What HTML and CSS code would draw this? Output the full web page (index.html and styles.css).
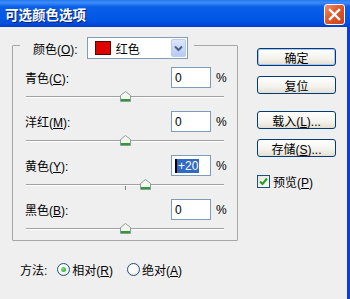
FILE: index.html
```html
<!DOCTYPE html>
<html lang="zh-CN">
<head>
  <meta charset="UTF-8" />
  <title>可选颜色选项</title>
  <link rel="stylesheet" href="styles.css">
</head>
<body>
  <div class="win">
    <!-- Заголовок -->
    <div class="titlebar">
      <span class="title">可选颜色选项</span>
      <span class="close">
        <svg width="13" height="13" viewBox="0 0 13 13"><path d="M2 2 L11 11 M11 2 L2 11" stroke="#fff" stroke-width="2.4" stroke-linecap="square"/></svg>
      </span>
    </div>

    <div class="client">
      <div class="main">
        <fieldset class="group">
          <legend class="legend">
            <span class="legend-inner">
              <span class="lbl">颜色(<u>O</u>):</span>
              <span class="combo">
                <span class="swatch"></span>
                <span class="combo-text">红色</span>
                <span class="combo-btn">
                  <svg width="9" height="7" viewBox="0 0 9 7"><path d="M1 1.5 L4.5 5 L8 1.5" fill="none" stroke="#4d6185" stroke-width="2"/></svg>
                </span>
              </span>
            </span>
          </legend>

          <div class="adj">
            <div class="adj-top"><span class="lbl">青色(<u>C</u>):</span><span class="num">0</span><span class="pct">%</span></div>
            <div class="track"><span class="thumb" style="left:50%"><svg width="11" height="11" viewBox="0 0 11 11"><path d="M5.5 0.5 L10.5 4.5 V10.5 H0.5 V4.5 Z" fill="#f7f7f2" stroke="#8b9aa6"/><rect x="1" y="8" width="9" height="2" fill="#2aa02a"/></svg></span></div>
          </div>
          <div class="adj">
            <div class="adj-top"><span class="lbl">洋红(<u>M</u>):</span><span class="num">0</span><span class="pct">%</span></div>
            <div class="track"><span class="thumb" style="left:50%"><svg width="11" height="11" viewBox="0 0 11 11"><path d="M5.5 0.5 L10.5 4.5 V10.5 H0.5 V4.5 Z" fill="#f7f7f2" stroke="#8b9aa6"/><rect x="1" y="8" width="9" height="2" fill="#2aa02a"/></svg></span></div>
          </div>
          <div class="adj">
            <div class="adj-top"><span class="lbl">黄色(<u>Y</u>):</span><span class="num"><span class="sel">+20</span></span><span class="pct">%</span></div>
            <div class="track ticked"><span class="thumb" style="left:60%"><svg width="11" height="11" viewBox="0 0 11 11"><path d="M5.5 0.5 L10.5 4.5 V10.5 H0.5 V4.5 Z" fill="#f7f7f2" stroke="#8b9aa6"/><rect x="1" y="8" width="9" height="2" fill="#2aa02a"/></svg></span></div>
          </div>
          <div class="adj">
            <div class="adj-top"><span class="lbl">黑色(<u>B</u>):</span><span class="num">0</span><span class="pct">%</span></div>
            <div class="track"><span class="thumb" style="left:50%"><svg width="11" height="11" viewBox="0 0 11 11"><path d="M5.5 0.5 L10.5 4.5 V10.5 H0.5 V4.5 Z" fill="#f7f7f2" stroke="#8b9aa6"/><rect x="1" y="8" width="9" height="2" fill="#2aa02a"/></svg></span></div>
          </div>
        </fieldset>

        <div class="method">
          <span class="lbl">方法:</span>
          <span class="radio on"></span><span class="rlbl">相对(<u>R</u>)</span>
          <span class="radio gap"></span><span class="rlbl">绝对(<u>A</u>)</span>
        </div>
      </div>

      <div class="side">
        <button class="btn default">确定</button>
        <button class="btn">复位</button>
        <button class="btn far">载入(<u>L</u>)...</button>
        <button class="btn">存储(<u>S</u>)...</button>
        <div class="check">
          <span class="box"><svg width="9" height="9" viewBox="0 0 9 9"><path d="M1 4.5 L3.5 7 L8 1.5" fill="none" stroke="#21a121" stroke-width="2"/></svg></span>
          <span>预览(<u>P</u>)</span>
        </div>
      </div>
    </div>
  </div>
</body>
</html>
```

FILE: styles.css
```css
* { margin: 0; padding: 0; box-sizing: border-box; }
body { font-family: "Liberation Sans", "Noto Sans CJK SC", sans-serif; font-size: 12px; color: #000; background: #efefef; }
u { text-decoration: underline; text-underline-offset: 1px; }

.win { width: 350px; height: 299px; overflow: hidden; display: flex; flex-direction: column; }

/* title bar */
.titlebar {
  height: 27px; flex: none; display: flex; align-items: center; justify-content: space-between;
  padding: 0 5px 0 5px;
  background: linear-gradient(#2a78f0 0%, #3d8cfb 10%, #0a5fe8 25%, #0056e4 75%, #0048d8 92%, #003cc6 100%);
}
.title {
  color: #fff; font-family: "Noto Sans CJK SC", sans-serif; font-weight: bold; font-size: 13.5px;
  text-shadow: 1px 1px 0 #0a1f6e; letter-spacing: 0;
}
.close {
  width: 21px; height: 21px; margin-top: 2px; border: 1px solid #fff; border-radius: 3px;
  display: flex; align-items: center; justify-content: center;
  background: linear-gradient(135deg, #f0916c 0%, #e1582d 45%, #c9401c 100%);
}

/* client area */
.client {
  flex: 1; display: flex; padding-left: 12px; border-right: 3px solid #0a3fd4;
}
.main { width: 226px; display: flex; flex-direction: column; }

.group {
  margin-top: 10px; border: 1px solid #a6a6a6; border-radius: 1px;
  padding: 14px 13px 10px 12px;
}
.legend { margin-left: -5px; padding: 0 6px 0 13px; height: 16px; }
.legend-inner { display: flex; align-items: center; height: 22px; gap: 9px; }

.combo {
  width: 101px; height: 22px; border: 1px solid #7f9db9; background: #fff;
  display: flex; align-items: center; padding-left: 7px;
}
.swatch { width: 16px; height: 14px; background: #dd0000; border: 1px solid #5a0000; }
.combo-text { margin-left: 5px; flex: 1; font-family: "Noto Sans CJK SC", sans-serif; }
.combo-btn {
  width: 15px; height: 18px; margin-right: 1px; border: 1px solid #b9cbf3; border-radius: 2px;
  background: linear-gradient(#dce6fc, #b7cbf5); display: flex; align-items: center; justify-content: center;
}

.adj { height: 44px; }
.adj:last-child { height: auto; }
.adj-top { display: flex; align-items: center; height: 21px; margin-right: -3px; }
.adj-top .lbl { flex: 1; }
.num {
  width: 40px; height: 21px; border: 1px solid #7f9db9; background: #fff;
  padding-left: 3px; display: flex; align-items: center; font-family: "Liberation Sans", sans-serif; font-size: 12px;
}
.sel { background: #316ac5; color: #fff; padding: 0 1px; border-left: 2px solid #000; }
.pct { width: 11px; margin-left: 5px; font-size: 12px; }

.track {
  position: relative; height: 2px; margin: 8px 0 0 1px;
  border-top: 1px solid #a0a0a0; border-bottom: 1px solid #fff;
}
.ticked::after {
  content: ""; position: absolute; left: 50%; top: 1px; width: 1px; height: 4px; background: #808080;
}
.thumb { position: absolute; top: -6px; width: 11px; height: 11px; margin-left: -5px; line-height: 0; }

/* method row */
.method { display: flex; align-items: center; margin: 20px 0 0 8px; height: 17px; }
.radio {
  width: 13px; height: 13px; border: 1px solid #1c5180; border-radius: 50%; margin-left: 10px; margin-right: 2px;
  background: radial-gradient(circle at 40% 40%, #fff 30%, #e0ddd3 100%);
  display: inline-flex; align-items: center; justify-content: center;
}
.radio.gap { margin-left: 14px; }
.radio.on::after {
  content: ""; width: 5px; height: 5px; border-radius: 50%; background: radial-gradient(circle at 35% 35%, #7fe07f, #21a121);
}

/* right column */
.side { margin-left: 19px; width: 79px; display: flex; flex-direction: column; padding-top: 21px; }
.btn {
  height: 18px; margin-bottom: 10px; font: inherit; font-size: 12px;
  border: 1px solid #003c74; border-radius: 3px;
  background: linear-gradient(#ffffff, #f3f2ec 60%, #e2dfd3);
}
.btn.default { box-shadow: inset 0 0 0 1px #a9c3f4; }
.btn.far { margin-top: 7px; }
.check { display: flex; align-items: center; gap: 3px; margin-top: 6px; }
.box {
  width: 13px; height: 13px; border: 1px solid #1c5180; background: linear-gradient(135deg, #e6e4dc, #fff);
  display: flex; align-items: center; justify-content: center;
}
```
